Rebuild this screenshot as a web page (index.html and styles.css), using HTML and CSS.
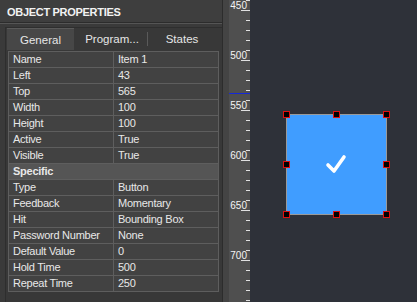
FILE: index.html
```html
<!DOCTYPE html>
<html lang="en">
<head>
    <meta charset="UTF-8">
    <title>Object Properties</title>
    <link rel="stylesheet" href="styles.css">
</head>
<body>
    <div class="panel">
        <div class="panel-header">OBJECT PROPERTIES</div>
        <div class="panel-body">
            <div class="tabs">
                <div class="tab active">General</div>
                <div class="tab">Program...</div>
                <div class="tab-sep"></div>
                <div class="tab">States</div>
            </div>
            <table class="props">
                <tr><td>Name</td><td>Item 1</td></tr>
                <tr><td>Left</td><td>43</td></tr>
                <tr><td>Top</td><td>565</td></tr>
                <tr><td>Width</td><td>100</td></tr>
                <tr><td>Height</td><td>100</td></tr>
                <tr><td>Active</td><td>True</td></tr>
                <tr><td>Visible</td><td>True</td></tr>
                <tr class="group"><td colspan="2">Specific</td></tr>
                <tr><td>Type</td><td>Button</td></tr>
                <tr><td>Feedback</td><td>Momentary</td></tr>
                <tr><td>Hit</td><td>Bounding Box</td></tr>
                <tr><td>Password Number</td><td>None</td></tr>
                <tr><td>Default Value</td><td>0</td></tr>
                <tr><td>Hold Time</td><td>500</td></tr>
                <tr><td>Repeat Time</td><td>250</td></tr>
            </table>
        </div>
    </div>
    <div class="gutter"></div>
    <div class="ruler">
        <div class="tick">450</div>
        <div class="tick major"></div>
        <div class="tick"></div>
        <div class="tick"></div>
        <div class="tick"></div>
        <div class="tick">500</div>
        <div class="tick major"></div>
        <div class="tick"></div>
        <div class="tick"></div>
        <div class="tick cursor"></div>
        <div class="tick">550</div>
        <div class="tick major"></div>
        <div class="tick"></div>
        <div class="tick"></div>
        <div class="tick"></div>
        <div class="tick">600</div>
        <div class="tick major"></div>
        <div class="tick"></div>
        <div class="tick"></div>
        <div class="tick"></div>
        <div class="tick">650</div>
        <div class="tick major"></div>
        <div class="tick"></div>
        <div class="tick"></div>
        <div class="tick"></div>
        <div class="tick">700</div>
        <div class="tick major"></div>
        <div class="tick"></div>
        <div class="tick"></div>
        <div class="tick"></div>
        <div class="tick"></div>
    </div>
    <div class="canvas">
        <div class="item">
            <svg class="check" width="24" height="22" viewBox="0 0 24 22">
                <polyline points="3,12 9,18 19,4" fill="none" stroke="#fff" stroke-width="3.6" stroke-linecap="round" stroke-linejoin="round"/>
            </svg>
            <span class="handle tl"></span>
            <span class="handle tm"></span>
            <span class="handle tr"></span>
            <span class="handle ml"></span>
            <span class="handle mr"></span>
            <span class="handle bl"></span>
            <span class="handle bm"></span>
            <span class="handle br"></span>
        </div>
    </div>
</body>
</html>
```
FILE: styles.css
```css
:root {
    --panel: #3a3a3a;
    --cell: #424242;
    --line: #5e5e5e;
    --fg: #e8e8e8;
    --canvas: #2e3139;
}
html, body {
    margin: 0;
    height: 100%;
}
body {
    display: grid;
    grid-template-columns: 222px 7px 21px 167px;
    background: var(--canvas);
    color: var(--fg);
    font-family: "Liberation Sans", Arial, sans-serif;
    font-size: 11px;
    letter-spacing: -0.25px;
    overflow: hidden;
}
.panel {
    background: var(--panel);
    display: flex;
    flex-direction: column;
    min-width: 0;
}
.panel-header {
    height: 22px;
    line-height: 25px;
    padding-left: 7px;
    background: #3e3e3e;
    font-weight: bold;
    font-size: 11px;
    letter-spacing: -0.3px;
    color: #f2f2f2;
    border-bottom: 1px solid #2c2c2c;
    box-shadow: 0 1px 0 #555;
}
.panel-body {
    flex: 1;
    margin: 4px 0 0 5px;
    padding-left: 1px;
    border-left: 1px solid #2e2e2e;
    border-top: 1px solid #2e2e2e;
    background: #383838;
}
.tabs {
    display: flex;
    align-items: center;
    height: 22px;
}
.tab {
    height: 22px;
    line-height: 23px;
    text-align: center;
    font-size: 11.5px;
    letter-spacing: 0;
    color: #e6e6e6;
}
.tab:nth-child(1) {
    width: 67px;
}
.tab:nth-child(2) {
    width: 70px;
    padding-left: 3px;
}
.tab:nth-child(4) {
    flex: 1;
    margin-right: 6px;
}
.tab.active {
    background: #474747;
    border-top: 1px solid #5a5a5a;
    height: 21px;
}
.tab-sep {
    width: 1px;
    height: 14px;
    background: #5a5a5a;
}
.props {
    width: 211px;
    border-collapse: collapse;
    margin: 1px 0 0 1px;
    table-layout: fixed;
}
.props td {
    height: 15px;
    padding: 0 0 0 4px;
    border: 1px solid var(--line);
    background: var(--cell);
    line-height: 15px;
    white-space: nowrap;
    overflow: hidden;
}
.props td:first-child {
    width: 100px;
}
.props .group td {
    background: #555;
    font-weight: bold;
}
.gutter {
    background: #444;
    border-left: 1px solid #2c2c2c;
}
.ruler {
    background: #4f4f4f;
    display: flex;
    flex-direction: column;
}
.tick {
    flex: none;
    height: 10px;
    padding-right: 3px;
    text-align: right;
    font-size: 10px;
    line-height: 12px;
    letter-spacing: 0;
    color: #f4f4f4;
    background: linear-gradient(#e0e0e0, #e0e0e0) right top / 4px 1px no-repeat;
}
.tick.major {
    background-size: 9px 1px;
}
.tick.cursor {
    background:
        linear-gradient(#e0e0e0, #e0e0e0) right top / 4px 1px no-repeat,
        linear-gradient(#1428d8, #1428d8) left top 3px / 100% 1px no-repeat;
}
.canvas {
    position: relative;
    background: var(--canvas);
}
.item {
    position: absolute;
    left: 36px;
    top: 114px;
    width: 99px;
    height: 99px;
    background: #409dff;
    border: 1px solid #9a9a9a;
    display: flex;
    align-items: center;
    justify-content: center;
}
.check {
    margin: 0 0 2px 0;
}
.handle {
    position: absolute;
    width: 5px;
    height: 5px;
    background: #000;
    border: 1px solid #e01010;
}
.tl, .tm, .tr { top: -4px; }
.ml, .mr { top: 46px; }
.bl, .bm, .br { bottom: -4px; }
.tl, .ml, .bl { left: -4px; }
.tm, .bm { left: 46px; }
.tr, .mr, .br { right: -4px; }
```
